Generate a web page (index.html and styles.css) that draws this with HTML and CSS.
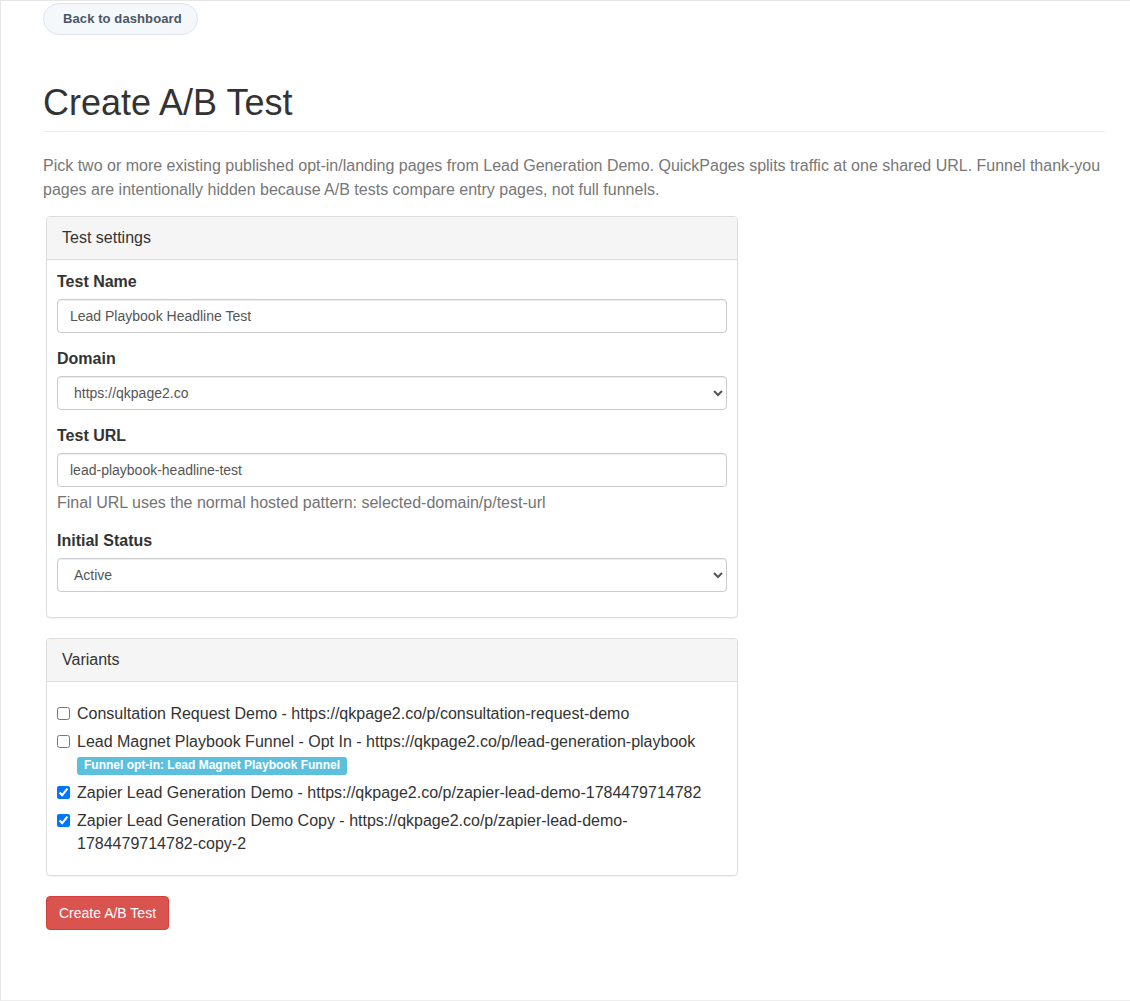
FILE: index.html
```html
<!DOCTYPE html>
<html lang="en">
<head>
<meta charset="utf-8">
<title>Create A/B Test</title>
<link rel="stylesheet" href="styles.css">
</head>
<body>
<div class="frame">
  <div class="page">
    <a class="back-btn" href="#">Back to dashboard</a>
    <h1 class="page-title">Create A/B Test</h1>
    <p class="intro">Pick two or more existing published opt-in/landing pages from Lead Generation Demo. QuickPages splits traffic at one shared URL. Funnel thank-you pages are intentionally hidden because A/B tests compare entry pages, not full funnels.</p>

    <form class="ab-form">
      <div class="panel">
        <div class="panel-heading">Test settings</div>
        <div class="panel-body">
          <div class="form-group">
            <label class="control-label">Test Name</label>
            <input class="form-control" type="text" value="Lead Playbook Headline Test">
          </div>
          <div class="form-group">
            <label class="control-label">Domain</label>
            <select class="form-control">
              <option>https://qkpage2.co</option>
            </select>
          </div>
          <div class="form-group">
            <label class="control-label">Test URL</label>
            <input class="form-control" type="text" value="lead-playbook-headline-test">
            <div class="help-block">Final URL uses the normal hosted pattern: selected-domain/p/test-url</div>
          </div>
          <div class="form-group">
            <label class="control-label">Initial Status</label>
            <select class="form-control">
              <option>Active</option>
            </select>
          </div>
        </div>
      </div>

      <div class="panel">
        <div class="panel-heading">Variants</div>
        <div class="panel-body variants">
          <label class="check">
            <input type="checkbox">
            <span class="check-text">Consultation Request Demo - https://qkpage2.co/p/consultation-request-demo</span>
          </label>
          <label class="check">
            <input type="checkbox">
            <span class="check-text">Lead Magnet Playbook Funnel - Opt In - https://qkpage2.co/p/lead-generation-playbook<br><span class="badge-info">Funnel opt-in: Lead Magnet Playbook Funnel</span></span>
          </label>
          <label class="check">
            <input type="checkbox" checked>
            <span class="check-text">Zapier Lead Generation Demo - https://qkpage2.co/p/zapier-lead-demo-1784479714782</span>
          </label>
          <label class="check">
            <input type="checkbox" checked>
            <span class="check-text">Zapier Lead Generation Demo Copy - https://qkpage2.co/p/zapier-lead-demo-1784479714782-copy-2</span>
          </label>
        </div>
      </div>

      <button class="btn-danger" type="button">Create A/B Test</button>
    </form>
  </div>
</div>
</body>
</html>
```

FILE: styles.css
```css
* {
  box-sizing: border-box;
}

html, body {
  margin: 0;
  padding: 0;
  background: #fff;
}

body {
  font-family: "Liberation Sans", Arial, Helvetica, sans-serif;
  font-size: 16px;
  line-height: 1.42857;
  color: #333;
}

.frame {
  width: 1131px;
  height: 1001px;
  border-top: 1px solid #e6e6e6;
  border-left: 1px solid #e6e6e6;
  border-bottom: 1px solid #eeeeee;
  overflow: hidden;
}

.page {
  padding: 2px 26px 0 42px;
}

.back-btn {
  display: inline-block;
  height: 32px;
  line-height: 29px;
  padding: 0 15px 0 19px;
  border: 1px solid #dde5ef;
  border-radius: 16px;
  background: #f5f8fb;
  color: #4a5566;
  font-size: 13px;
  font-weight: bold;
  text-decoration: none;
  letter-spacing: 0.1px;
}

.page-title {
  margin: 48px 0 0;
  padding-bottom: 8px;
  border-bottom: 1px solid #eeeeee;
  font-size: 36px;
  font-weight: 500;
  line-height: 1.1;
  color: #333;
}

.intro {
  margin: 22px 0 14px;
  color: #777;
  line-height: 24px;
}

.ab-form {
  width: 692px;
  margin-left: 3px;
}

.panel {
  border: 1px solid #dddddd;
  border-radius: 4px;
  margin-bottom: 20px;
  box-shadow: 0 1px 1px rgba(0, 0, 0, 0.05);
}

.panel-heading {
  padding: 10px 15px;
  line-height: 22px;
  background: #f5f5f5;
  border-bottom: 1px solid #dddddd;
  border-radius: 3px 3px 0 0;
  color: #333;
}

.panel-body {
  padding: 11px 10px 10px;
}

.form-group {
  margin-bottom: 15px;
}

.control-label {
  display: block;
  font-weight: bold;
  line-height: 22px;
  margin-bottom: 6px;
}

.form-control {
  display: block;
  width: 100%;
  height: 34px;
  padding: 6px 12px;
  font-family: "Liberation Sans", Arial, Helvetica, sans-serif;
  font-size: 14px;
  line-height: 20px;
  color: #555;
  background: #fff;
  border: 1px solid #cccccc;
  border-radius: 4px;
  box-shadow: inset 0 1px 1px rgba(0, 0, 0, 0.075);
}

.help-block {
  margin-top: 4px;
  color: #737373;
  line-height: 24px;
}

.panel-body.variants {
  padding: 20px 10px 15px;
}

.check {
  display: flex;
  align-items: flex-start;
  line-height: 23px;
  margin-bottom: 5px;
  color: #333;
}

.check input {
  flex: none;
  width: 13px;
  height: 13px;
  margin: 5px 7px 0 0;
}

.check-text {
  flex: 1;
}

.badge-info {
  display: inline-block;
  padding: 2px 7px 3px;
  font-size: 12px;
  font-weight: bold;
  line-height: 13px;
  color: #fff;
  background: #5bc0de;
  border-radius: 3px;
  vertical-align: 1px;
}

.btn-danger {
  display: inline-block;
  height: 34px;
  padding: 6px 12px;
  font-family: "Liberation Sans", Arial, Helvetica, sans-serif;
  font-size: 14px;
  line-height: 20px;
  color: #fff;
  background: #d9534f;
  border: 1px solid #d43f3a;
  border-radius: 4px;
}
```
